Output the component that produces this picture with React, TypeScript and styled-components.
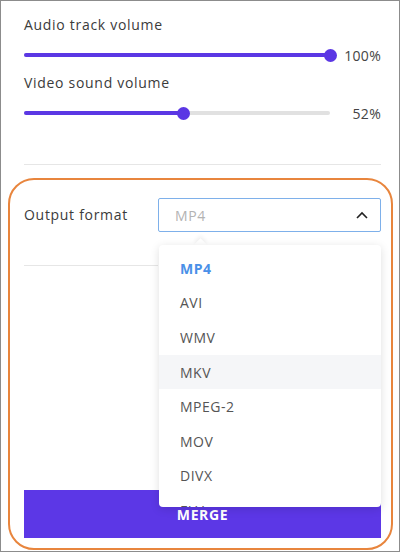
import React from "react";
import styled, { createGlobalStyle } from "styled-components";

const GlobalStyle = createGlobalStyle`
  body {
    margin: 0;
    font-family: "Open Sans", "Noto Sans", sans-serif;
    color: #3d3d3d;
  }
`;

const Frame = styled.div`
  position: relative;
  width: 400px;
  height: 552px;
  box-sizing: border-box;
  border: 1px solid #8c8c8c;
  background: #fff;
  overflow: hidden;
  padding: 14px 18px 0 23px;
`;

const Label = styled.div`
  font-size: 14px;
  line-height: 20px;
  letter-spacing: 0.7px;
  color: #3b3b3b;
`;

const SliderRow = styled.div`
  display: flex;
  align-items: center;
  height: 20px;
  margin: 10px 0 8px;
`;

const Track = styled.div`
  position: relative;
  width: 306px;
  height: 4px;
  border-radius: 2px;
  background: #e1e1e1;
`;

const Fill = styled.div`
  height: 100%;
  border-radius: 2px;
  background: #5b37e4;
`;

const Thumb = styled.div`
  position: absolute;
  top: 50%;
  width: 13px;
  height: 13px;
  margin: -6.5px 0 0 -6.5px;
  border-radius: 50%;
  background: #5b37e4;
`;

const Value = styled.div`
  flex: 1;
  text-align: right;
  font-size: 14px;
  letter-spacing: 0.3px;
  color: #444;
`;

const Divider = styled.div<{ $width?: string }>`
  width: ${(p) => p.$width ?? "100%"};
  height: 1px;
  background: #e6e6e6;
`;

const FormatSection = styled.div`
  position: relative;
  margin-top: 41px;
`;

const FormatRow = styled.div`
  display: flex;
  align-items: center;
  height: 34px;
  margin: 33px 0 33px;
`;

const FormatLabel = styled(Label)`
  width: 134px;
`;

const Select = styled.div`
  flex: 1;
  display: flex;
  align-items: center;
  justify-content: space-between;
  height: 34px;
  box-sizing: border-box;
  border: 1px solid #7eb0ea;
  border-radius: 2px;
  padding: 0 12px 0 16px;
  font-size: 14px;
  letter-spacing: 0.6px;
  color: #b3b3b3;
`;

const MergeButton = styled.button`
  display: block;
  width: 100%;
  height: 48px;
  margin-top: 224px;
  border: none;
  background: #5c37e6;
  color: #fff;
  font-family: inherit;
  font-size: 14px;
  font-weight: 700;
  letter-spacing: 0.6px;
`;

const Dropdown = styled.div`
  position: absolute;
  left: 135px;
  top: 81px;
  width: 222px;
  height: 262px;
  box-sizing: border-box;
  padding-top: 6px;
  background: #fff;
  border-radius: 4px;
  box-shadow: 0 2px 10px rgba(0, 0, 0, 0.13);
  overflow: hidden;
`;

const Caret = styled.div`
  position: absolute;
  left: 172px;
  top: 76px;
  width: 9px;
  height: 9px;
  background: #fff;
  transform: rotate(45deg);
  box-shadow: -2px -2px 4px rgba(0, 0, 0, 0.06);
`;

const Option = styled.div<{ $selected?: boolean; $hover?: boolean }>`
  height: 34.6px;
  display: flex;
  align-items: center;
  padding-left: 21px;
  font-size: 14px;
  letter-spacing: 0.5px;
  font-weight: ${(p) => (p.$selected ? 700 : 400)};
  color: ${(p) => (p.$selected ? "#4a90e8" : "#555")};
  background: ${(p) => (p.$hover ? "#f5f6f8" : "transparent")};
`;

const Highlight = styled.div`
  position: absolute;
  left: 7px;
  top: 177px;
  width: 385px;
  height: 372px;
  box-sizing: border-box;
  border: 2px solid #e8853d;
  border-radius: 26px;
  pointer-events: none;
`;

const ChevronUp = () => (
  <svg width="12" height="8" viewBox="0 0 12 8" fill="none">
    <path d="M1 7L6 2L11 7" stroke="#222" strokeWidth="1.6" />
  </svg>
);

const Slider = ({ value }: { value: number }) => (
  <SliderRow>
    <Track>
      <Fill style={{ width: `${value}%` }} />
      <Thumb style={{ left: `${value}%` }} />
    </Track>
    <Value>{value}%</Value>
  </SliderRow>
);

const formats = ["MP4", "AVI", "WMV", "MKV", "MPEG-2", "MOV", "DIVX", "FLV"];

export default function App() {
  return (
    <>
      <GlobalStyle />
      <Frame>
        <Label>Audio track volume</Label>
        <Slider value={100} />
        <Label>Video sound volume</Label>
        <Slider value={52} />
        <FormatSection>
          <Divider />
          <FormatRow>
            <FormatLabel>Output format</FormatLabel>
            <Select>
              MP4
              <ChevronUp />
            </Select>
          </FormatRow>
          <Divider $width="134px" />
          <MergeButton>MERGE</MergeButton>
          <Caret />
          <Dropdown>
            {formats.map((f, i) => (
              <Option key={f} $selected={i === 0} $hover={f === "MKV"}>
                {f}
              </Option>
            ))}
          </Dropdown>
        </FormatSection>
        <Highlight />
      </Frame>
    </>
  );
}
